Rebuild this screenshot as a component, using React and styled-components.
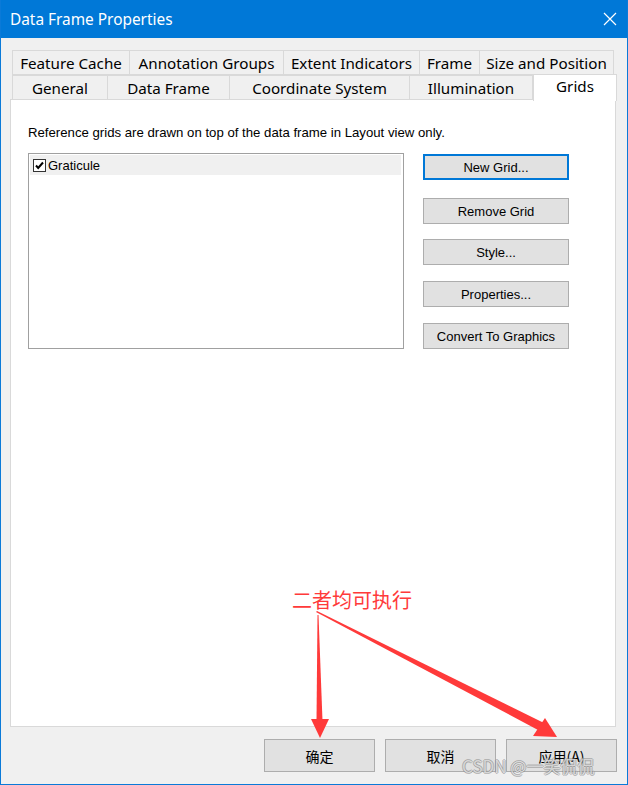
import React from "react";
import styled, { createGlobalStyle } from "styled-components";

const Global = createGlobalStyle`
  html, body { margin: 0; padding: 0; background: #f0f0f0; }
  * { box-sizing: border-box; }
`;

const Window = styled.div`
  position: relative;
  width: 628px;
  height: 785px;
  border: 1px solid #0a7ad8;
  border-top: none;
  background: #f0f0f0;
  display: flex;
  flex-direction: column;
  font-family: "Liberation Sans", Arial, sans-serif;
  overflow: hidden;
`;

const TitleBar = styled.div`
  height: 38px;
  background: #0078d7;
  display: flex;
  align-items: center;
  justify-content: space-between;
  padding: 0 10px 0 9px;
  color: #fff;
  font-family: "Noto Sans", "Open Sans", sans-serif;
  font-size: 15.4px;
`;

const Body = styled.div`
  flex: 1;
  display: flex;
  flex-direction: column;
  padding: 12px 10px 0 9px;
`;

const TabRow = styled.div`
  display: flex;
  height: 25px;
  padding-left: 2px;
  align-items: flex-end;
`;

const Tab = styled.div`
  width: ${(p) => p.$w}px;
  height: ${(p) => (p.$active ? 27 : 25)}px;
  margin-bottom: ${(p) => (p.$active ? -1 : 0)}px;
  background: ${(p) => (p.$active ? "#fff" : "#f0f0f0")};
  border: 1px solid #d9d9d9;
  border-left: ${(p) => (p.$first || p.$active ? "1px solid #d9d9d9" : "none")};
  border-bottom: ${(p) => (p.$active ? "none" : "1px solid #d9d9d9")};
  display: flex;
  align-items: center;
  justify-content: center;
  padding-bottom: ${(p) => (p.$active ? 4 : 0)}px;
  font-family: "Noto Sans", "Open Sans", sans-serif;
  font-size: 15.2px;
  color: #000;
  white-space: nowrap;
  position: relative;
  z-index: ${(p) => (p.$active ? 2 : 1)};
`;

const Panel = styled.div`
  width: 606px;
  height: 628px;
  margin-top: -1px;
  background: #fff;
  border: 1px solid #d9d9d9;
  padding: 25px 0 0 17px;
  font-size: 12.5px;
  color: #000;
`;

const Note = styled.div`
  height: 15px;
  line-height: 15px;
  font-size: 13.2px;
`;

const Content = styled.div`
  display: flex;
  margin-top: 13px;
`;

const List = styled.div`
  width: 376px;
  height: 196px;
  border: 1px solid #a0a0a0;
  padding: 1px;
`;

const ListRow = styled.div`
  height: 20px;
  width: 371px;
  background: #f0f0f0;
  display: flex;
  align-items: center;
  padding-left: 3px;
  gap: 2px;
  font-size: 13px;
`;

const ButtonCol = styled.div`
  display: flex;
  flex-direction: column;
  margin-left: 19px;
  padding-top: 1px;
`;

const SideButton = styled.div`
  width: 146px;
  height: 26px;
  margin-bottom: ${(p) => p.$gap}px;
  background: #e1e1e1;
  border: ${(p) => (p.$focus ? "2px solid #0078d7" : "1px solid #adadad")};
  display: flex;
  align-items: center;
  justify-content: center;
  font-size: 13px;
  color: #000;
`;

const Footer = styled.div`
  display: flex;
  justify-content: flex-end;
  gap: 10px;
  padding: 12px 0 0 0;
`;

const FooterButton = styled.div`
  width: 111px;
  height: 33px;
  background: #e1e1e1;
  border: 1px solid #adadad;
  display: flex;
  align-items: center;
  justify-content: center;
  font-family: "Noto Sans CJK SC", sans-serif;
  font-size: 14px;
  color: #000;
`;

const Overlay = styled.svg`
  position: absolute;
  left: -1px;
  top: 0;
  pointer-events: none;
`;

const Callout = styled.div`
  position: absolute;
  left: 291px;
  top: 587px;
  font-family: "Noto Sans CJK SC", sans-serif;
  font-size: 20px;
  line-height: 26px;
  color: #ff3a3a;
  white-space: nowrap;
`;

const Watermark = styled.div`
  position: absolute;
  left: 461px;
  top: 754px;
  font-family: "Noto Sans CJK SC", sans-serif;
  font-size: 17px;
  line-height: 24px;
  color: rgba(255, 255, 255, 0.65);
  text-shadow: 1px 0 0 rgba(120, 120, 120, 0.45), -1px 0 0 rgba(120, 120, 120, 0.45),
    0 1px 0 rgba(120, 120, 120, 0.45), 0 -1px 0 rgba(120, 120, 120, 0.45);
  white-space: nowrap;
`;

const Check = () => (
  <svg width="13" height="13" viewBox="0 0 13 13">
    <rect x="0.5" y="0.5" width="12" height="12" fill="#fff" stroke="#333" />
    <path d="M3 6.5 L5.2 9 L10 3.5" fill="none" stroke="#000" strokeWidth="2" />
  </svg>
);

const Close = () => (
  <svg width="14" height="14" viewBox="0 0 14 14">
    <path d="M1 1 L13 13 M13 1 L1 13" stroke="#fff" strokeWidth="1.2" />
  </svg>
);

const row1 = [
  ["Feature Cache", 118],
  ["Annotation Groups", 154],
  ["Extent Indicators", 136],
  ["Frame", 60],
  ["Size and Position", 134],
];
const row2 = [
  ["General", 96],
  ["Data Frame", 122],
  ["Coordinate System", 180],
  ["Illumination", 123],
];

const sideButtons = [
  ["New Grid...", 18, true],
  ["Remove Grid", 15],
  ["Style...", 16],
  ["Properties...", 16],
  ["Convert To Graphics", 0],
];

export default function App() {
  return (
    <>
      <Global />
      <Window>
        <TitleBar>
          <span>Data Frame Properties</span>
          <Close />
        </TitleBar>
        <Body>
          <TabRow>
            {row1.map(([t, w], i) => (
              <Tab key={t} $w={w} $first={i === 0}>
                {t}
              </Tab>
            ))}
          </TabRow>
          <TabRow>
            {row2.map(([t, w], i) => (
              <Tab key={t} $w={w} $first={i === 0}>
                {t}
              </Tab>
            ))}
            <Tab $w={84} $active>
              Grids
            </Tab>
          </TabRow>
          <Panel>
            <Note>Reference grids are drawn on top of the data frame in Layout view only.</Note>
            <Content>
              <List>
                <ListRow>
                  <Check />
                  <span>Graticule</span>
                </ListRow>
              </List>
              <ButtonCol>
                {sideButtons.map(([t, g, f]) => (
                  <SideButton key={t} $gap={g} $focus={f}>
                    {t}
                  </SideButton>
                ))}
              </ButtonCol>
            </Content>
          </Panel>
          <Footer>
            <FooterButton>确定</FooterButton>
            <FooterButton>取消</FooterButton>
            <FooterButton>应用(A)</FooterButton>
          </Footer>
        </Body>
        <Callout>二者均可执行</Callout>
        <Overlay width="628" height="785" viewBox="0 0 628 785">
          <polygon points="317.5,615 318.5,615 322.5,721 316.5,721" fill="#ff3a3a" />
          <polygon points="311,719 329,719 320,738" fill="#ff3a3a" />
          <polygon points="316,612 317,611 544,723 538,730" fill="#ff3a3a" />
          <polygon points="533,736 545,718 557,737" fill="#ff3a3a" />
        </Overlay>
        <Watermark>CSDN @一笑侃侃</Watermark>
      </Window>
    </>
  );
}
